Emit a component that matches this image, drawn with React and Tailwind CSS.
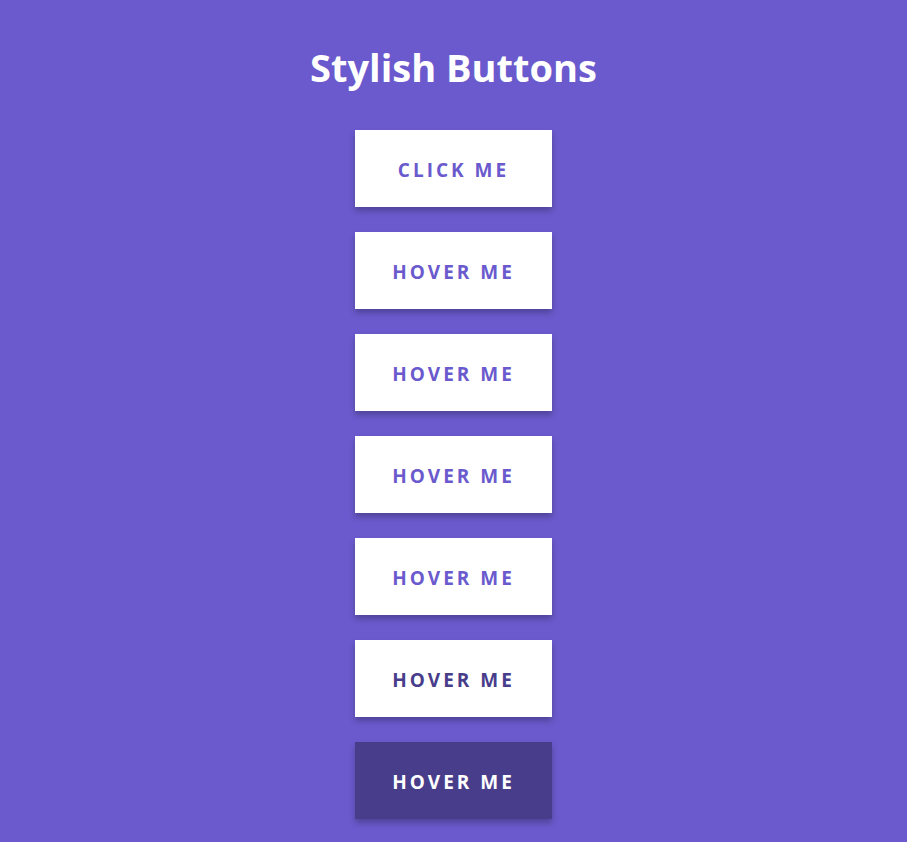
import React from "react";

const buttons = [
  { label: "Click Me", style: "bg-white text-[#6a5acd]" },
  { label: "Hover Me", style: "bg-white text-[#6a5acd]" },
  { label: "Hover Me", style: "bg-white text-[#6a5acd]" },
  { label: "Hover Me", style: "bg-white text-[#6a5acd]" },
  { label: "Hover Me", style: "bg-white text-[#6a5acd]" },
  { label: "Hover Me", style: "bg-white text-[#483d8b]" },
  { label: "Hover Me", style: "bg-[#483d8b] text-white" },
];

export default function App() {
  return (
    <div
      className="min-h-[842px] bg-[#6a5acd] flex flex-col items-center pt-[39px] pb-8"
      style={{ fontFamily: '"Open Sans", "Noto Sans", sans-serif' }}
    >
      <h1 className="text-[38px] leading-[56px] font-bold text-white mb-[35px]">Stylish Buttons</h1>

      {/* button stack */}
      <div className="flex flex-col gap-[25px]">
        {buttons.map((b, i) => (
          <button
            key={i}
            className={`w-[197px] h-[77px] pt-[3px] flex items-center justify-center uppercase text-[19px] font-bold tracking-[3px] shadow-[0_4px_6px_rgba(0,0,0,0.25)] ${b.style}`}
          >
            {b.label}
          </button>
        ))}
      </div>
    </div>
  );
}
